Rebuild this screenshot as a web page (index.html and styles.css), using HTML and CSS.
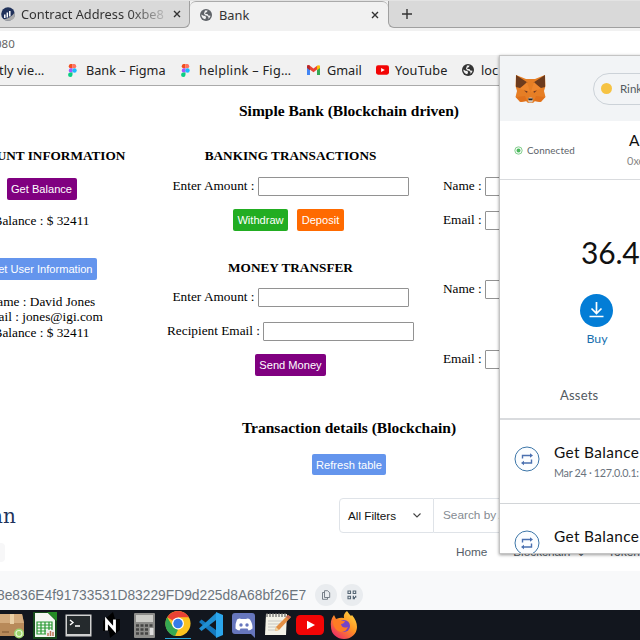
FILE: index.html
```
<!DOCTYPE html>
<html lang="en">
<head>
<meta charset="utf-8">
<title>Bank</title>
<link rel="stylesheet" href="styles.css">
</head>
<body>
<svg class="defs" width="0" height="0">
  <defs>
    <symbol id="globe" viewBox="0 0 12 12"><circle cx="6" cy="6" r="6" fill="currentColor"/><path d="M1.300 5.500 3.500 6.800 5.300 7l.8 1.300-.8 1.900C3 10 1.300 8.200 1.300 5.500zM5 1.500 7.600 1.600 7 3 5.500 3.700 5.200 5l2.300.1.800 1.300 2.200.3C10.200 8 9.500 9 8.300 9.800L8.500 8 7 6.700 5 6.200 4 4.500z" fill="#f1f1f1"/></symbol>
    <symbol id="figma" viewBox="0 0 9 13"><path d="M4.500 0h-2a2.200 2.200 0 0 0 0 4.300h2z" fill="#f24e1e"/><path d="M4.500 0h2a2.200 2.200 0 0 1 0 4.300h-2z" fill="#ff7262"/><path d="M4.500 4.300h-2a2.200 2.200 0 0 0 0 4.300h2z" fill="#a259ff"/><circle cx="6.500" cy="6.500" r="2.200" fill="#1abcfe"/><path d="M4.500 8.600h-2a2.200 2.200 0 1 0 2 2.200z" fill="#0acf83"/></symbol>
    <symbol id="swap" viewBox="0 0 26 26"><circle cx="13" cy="13" r="12" fill="#fbfdff" stroke="#3d76a8" stroke-width="1"/><path d="M8.500 12.500V9.500h8M17.500 13.500v3.500h-8" fill="none" stroke="#4a70b0" stroke-width="1.400"/><path d="M16 7.200 19 9.500l-3 2.300zM10 14.700 7 17l3 2.300z" fill="#4a70b0"/></symbol>
    <symbol id="yt" viewBox="0 0 28 20"><rect width="28" height="20" rx="4.500" fill="#f20505"/><path d="m11 5.800 8 4.200-8 4.200z" fill="#fff"/></symbol>
  </defs>
</svg>
<div class="desktop">
  <nav class="tabs">
    <div class="tab tab-idle">
      <svg class="scan" viewBox="0 0 14 14"><circle cx="7" cy="7" r="6.800" fill="#21325b"/><path d="M3.800 11V7.500M6.300 10.500V5.500M8.800 9.500V4" stroke="#fff" stroke-width="1.500"/><path d="M2.500 12.400Q10 11 13.700 5.500 15 12 9 13.600 5 14.300 2.500 12.400" fill="#aaa"/></svg>
      <span class="tab-title faded">Contract Address 0xbe8</span>
      <svg class="x" viewBox="0 0 8 8"><path d="m1 1 6 6m0-6-6 6"/></svg>
    </div>
    <div class="tab tab-live">
      <svg class="globe grey"><use href="#globe"/></svg>
      <span class="tab-title">Bank</span>
      <svg class="x" viewBox="0 0 8 8"><path d="m1 1 6 6m0-6-6 6"/></svg>
    </div>
    <div class="tab-rest"><svg viewBox="0 0 10 10"><path d="M5 0v10M0 5h10" stroke="#333" stroke-width="1.400"/></svg></div>
  </nav>
  <div class="address">080</div>
  <div class="bookmarks">
    <span class="bm bm-first"><span>tly vie…</span></span>
    <span class="bm bm-bank"><svg class="figma"><use href="#figma"/></svg>Bank – Figma</span>
    <span class="bm bm-help"><svg class="figma"><use href="#figma"/></svg>helplink – Fig…</span>
    <span class="bm bm-mail"><svg class="gmail" viewBox="0 0 13 10"><path d="M0 1.500V10h3V4z" fill="#4285f4"/><path d="M13 1.500V10h-3V4z" fill="#34a853"/><path d="M0 1.500C0 0 1.500-.4 2.600.5L6.500 3.400 10.400.5 10 4.500 6.500 7.200 0 2.500z" fill="#ea4335"/><path d="M0 1.500V3l3 2.200V.8C1.500-.3 0 0 0 1.500" fill="#b5282c"/><path d="M10 .8v4.400L13 3V1.500C13 0 11.500-.3 10 .8" fill="#fbbc04"/></svg>Gmail</span>
    <span class="bm bm-tube"><svg class="tube"><use href="#yt"/></svg>YouTube</span>
    <span class="bm"><svg class="globe"><use href="#globe"/></svg>loc</span>
  </div>

  <main class="bank">
    <h1>Simple Bank (Blockchain driven)</h1>
    <div class="columns">
      <section class="account">
        <h2>ACCOUNT INFORMATION</h2>
        <button class="purple balance-btn">Get Balance</button>
        <p class="balance">Balance : $ 32411</p>
        <button class="blue user-btn">Get User Information</button>
        <p class="details">Name : David Jones<br>Email : jones@igi.com<br>Balance : $ 32411</p>
      </section>
      <section class="transact">
        <h2>BANKING TRANSACTIONS</h2>
        <label>Enter Amount :<input></label>
        <div class="pair"><button class="green">Withdraw</button><button class="orange">Deposit</button></div>
        <h2 class="transfer">MONEY TRANSFER</h2>
        <label class="sum">Enter Amount :<input></label>
        <label class="recipient">Recipient Email :<input></label>
        <button class="purple send">Send Money</button>
      </section>
      <section class="people">
        <label>Name :<input></label>
        <label class="p2">Email :<input></label>
        <label class="p3">Name :<input></label>
        <label class="p4">Email :<input></label>
      </section>
    </div>
    <div class="history">
      <h1>Transaction details (Blockchain)</h1>
      <button class="blue refresh">Refresh table</button>
    </div>
  </main>

  <section class="explorer">
    <div class="top">
      <span class="logo">an</span>
      <div class="filters"><span>All Filters</span><svg viewBox="0 0 8 5"><path d="m.500.500 3.500 3.500L7.500.500" fill="none" stroke="#444" stroke-width="1.100"/></svg></div>
      <div class="search">Search by A</div>
    </div>
    <div class="menu"><i class="chip"></i><span class="home">Home</span><span class="chain">Blockchain</span><span class="drop">⌄</span><span>Token</span></div>
    <div class="hash"><span>8e836E4f91733531D83229FD9d225d8A68bf26E7</span>
      <i><svg viewBox="0 0 10 10"><path d="M3.500.700h3l2.200 2v4.800H3.500zM3.500 2.500H1.500v6.800h5V7.500" fill="none" stroke="#6b747e" stroke-width=".9"/></svg></i>
      <i><svg viewBox="0 0 10 10"><path d="M1 1h2.500v2.500H1zM6.200 1h2.500v2.500H6.200zM1 6.200h2.500v2.500H1z" fill="none" stroke="#566675" stroke-width="1.100"/><path d="M5.700 5.700h1.300v1.300h1V5.700h1.300v2H8v1.500H5.700z" fill="#566675"/></svg></i>
    </div>
  </section>

  <footer class="taskbar">
    <svg class="t-box" viewBox="0 0 25 27"><path d="M0 2h22l2 9v13H0z" fill="#b88a5a"/><path d="M0 2h22l2 9H0z" fill="#d3ab7d"/><path d="M10 2h4v10h-4z" fill="#ead0a6"/><path d="M2 20h7" stroke="#79522f"/><circle cx="19" cy="21.500" r="5" fill="#9cd56e"/><circle cx="19" cy="21.500" r="3" fill="none" stroke="#e5f7d5" stroke-width="1.200"/></svg>
    <svg class="t-sheet" viewBox="0 0 24 27"><path d="M0 0h24v27H0z" fill="#174b1b"/><path d="M2 1h13l7 7v17H2z" fill="#f4f8f2"/><path d="M14 0h10v9z" fill="#238b24"/><path d="M4 10h15v12H4zM4 13h15M4 16h15M4 19h15M8 10v12M12 10v12M16 10v12" fill="none" stroke="#299932" stroke-width="1.200"/><path d="M13 18h8v6h-8z" fill="#eee"/><path d="M15 24v-3M17.500 24v-5M20 24v-4" stroke="#c07858" stroke-width="1.500"/></svg>
    <svg class="t-term" viewBox="0 0 27 23"><path d="M.5.500h26v22H.5z" fill="#d1d1d1"/><path d="M2 2h23v18H2z" fill="#252a2d"/><path d="m5 6 3 2.500L5 11M10 12h5" fill="none" stroke="#fff" stroke-width="1.400"/></svg>
    <svg class="t-n" viewBox="0 0 17 26"><path d="m10 0 2 7h5v11L7 26l-1-7H0V9z" fill="#000"/><path d="M3.500 18.500V8.500L11.500 17.500V7.500" fill="none" stroke="#fff" stroke-width="2.800"/></svg>
    <svg class="t-calc" viewBox="0 0 21 25"><rect width="21" height="25" rx="1" fill="#8c8c8a"/><path d="M2 2h17v7H2z" fill="#cbcbc7"/><path d="M2 12.500h17M2 16.500h17M2 20.500h17" stroke="#444" stroke-width="2.400" stroke-dasharray="3 1.500"/><path d="M15.500 15h4v7h-4z" fill="#ddd"/></svg>
    <svg class="t-chrome" viewBox="0 0 26 28"><circle cx="13" cy="13" r="13" fill="#fcc31e"/><path d="M13 13 1.800 6.400A13 13 0 0 1 24.300 6.600H13z" fill="#e94235"/><path d="M1.800 6.400 8 16.500l5 3L10 26A13 13 0 0 1 1.800 6.400" fill="#35a853"/><circle cx="13" cy="13" r="6.200" fill="#fff"/><circle cx="13" cy="13" r="4.900" fill="#357ce8"/></svg>
    <svg class="t-code" viewBox="0 0 26 26"><path d="M18 1v24L1 10l2.500-2.500L18 18z" fill="#1478bd"/><path d="M18 1v7L3.500 19 1 16.500z" fill="#208fd2"/><path d="m18 0 7 3v20l-7 3z" fill="#2ba6ed"/></svg>
    <svg class="t-discord" viewBox="0 0 24 25"><path d="M3 0h17a3 3 0 0 1 3 3v22l-4-4H3a3 3 0 0 1-3-3V3a3 3 0 0 1 3-3" fill="#6676bd"/><path d="M5 6.500Q8 5 9 6h5q2-1 4 .5 3 5 2.500 9-2.500 2-4 2l-1-2h-7l-1 2q-2-.2-4-2Q3 11 5 6.500" fill="#fff"/><circle cx="9" cy="12" r="1.700" fill="#6676bd"/><circle cx="15" cy="12" r="1.700" fill="#6676bd"/></svg>
    <svg class="t-note" viewBox="0 0 28 26"><path d="M2 2h21l-1 21H1z" fill="#f3f2e8"/><path d="M3 1v4M6 1v4M9 1v4M12 1v4M15 1v4M18 1v4M21 1v4" stroke="#666" stroke-width="1.200"/><path d="M4 9h14M4 12h13M4 15h10M4 18h8" stroke="#bbb" stroke-width=".8"/><path d="m11 19 1-4L24 3l3 2-12 13z" fill="#e38e43"/><path d="m11 19 1-4 3 3z" fill="#edd3a3"/><path d="m24 3 3 2-2 2-3-2z" fill="#c76552"/></svg>
    <svg class="t-yt"><use href="#yt"/></svg>
    <svg class="t-fox" viewBox="0 0 27 28"><defs><linearGradient id="ff" x1="1" y1="0" x2=".2" y2="1"><stop offset="0" stop-color="#ffe34a"/><stop offset=".5" stop-color="#ff9322"/><stop offset="1" stop-color="#ef2868"/></linearGradient></defs><path d="M17 0q2 3 4 5l1-1q5 6 5 12a13 12 0 0 1-26 0Q0 9 4 4l2 4q5-2 8-1-1-4 3-7" fill="url(#ff)"/><circle cx="14" cy="15" r="6" fill="#7644c6"/><path d="M3 9q5-2 8 1h4q-1 3-4 3 1 5 7 3-3 7-10 4-6-4-5-11" fill="#ff7b24"/></svg>
  </footer>

  <aside class="wallet">
    <header>
      <svg class="fox" viewBox="0 0 31 30"><path d="m1 1 10 4h9l10-4 .5 11-1.500 5 1.500 6-4.500 5-6-1-2 2h-5l-2-2-6 1-4.500-5L2 17 .5 12z" fill="#e67e25"/><path d="m1 1 11.500 7.500L5 14l-4-1zM30 1 18.500 8.500 26 14l4-1z" fill="#6d3b1d"/><path d="m12 8 3 10-5-2-5-1zM19 8l-3 10 5-2 5-1z" fill="#ee862d"/><path d="m9 16.500 3.500.8-.5 1.700zM22 16.500l-3.500.8.5 1.700z" fill="#743c22"/><path d="m1 23 9-1 2 5-6 1zM30 23l-9-1-2 5 6 1z" fill="#e0711c"/><path d="m13 24.500 1.500-1h2l1.500 1-.5 4h-4z" fill="#d8c7b8"/><path d="M13 24.500h5l-.8 1.700h-3.400z" fill="#22211f"/></svg>
      <div class="network"><i></i>Rink</div>
    </header>
    <div class="status">
      <svg viewBox="0 0 9 9"><circle cx="4.500" cy="4.500" r="3.700" fill="#effaf0" stroke="#7acb86" stroke-width=".9"/><circle cx="4.500" cy="4.500" r="1.900" fill="#4cb85f"/></svg>
      <span class="connected">Connected</span>
      <div class="who"><b>A</b><span>0xe</span></div>
    </div>
    <div class="funds">
      <div class="amount">36.4</div>
      <svg viewBox="0 0 33 33"><circle cx="16.500" cy="16.500" r="16.500" fill="#037dd6"/><path d="M16.500 8v11.500m-5-5 5 5 5-5M9.500 22.500h14" fill="none" stroke="#fff" stroke-width="1.700"/></svg>
      <span class="buy">Buy</span>
    </div>
    <div class="assets">Assets</div>
    <div class="entry"><svg><use href="#swap"/></svg><div><b>Get Balance</b><span>Mar 24 · 127.0.0.1:</span></div></div>
    <div class="entry"><svg><use href="#swap"/></svg><div><b>Get Balance</b></div></div>
  </aside>
</div>
</body>
</html>
```

FILE: styles.css
```
* { box-sizing: border-box; }
body { margin: 0; }
svg { display: block; flex: none; }
.defs { position: absolute; }
.desktop { position: relative; width: 640px; height: 640px; overflow: hidden; background: #fff; display: flex; flex-direction: column; }
.desktop > * { flex: none; }

.tabs { height: 31px; display: flex; background: #f1f1f1; font: 12.8px "Noto Sans", sans-serif; color: #333; border-top: 1px solid #e3e3e3; }
.tab { display: flex; align-items: center; height: 27px; }
.tab-idle { width: 190px; background: #d9d9d9; border-bottom: 1px solid #a0a0a0; border-right: 1px solid #a0a0a0; border-bottom-right-radius: 6px; padding-left: 1px; }
.scan { width: 14px; height: 14px; }
.tab-title { margin-left: 6px; white-space: nowrap; }
.faded { width: 144px; overflow: hidden; -webkit-mask-image: linear-gradient(90deg, #000 75%, transparent 105%); mask-image: linear-gradient(90deg, #000 75%, transparent 105%); }
.x { width: 8px; height: 8px; stroke: #333; stroke-width: 1.400; }
.tab-idle .x { margin-left: 8px; }
.tab-live { width: 198px; padding-left: 10px; border-top: 1px solid #aaa; border-radius: 6px 6px 0 0; }
.tab-live .tab-title { width: 152px; margin-left: 7px; }
.globe { width: 12px; height: 12px; color: #333; }
.grey { color: #5f6368; }
.tab-rest { flex: 1; height: 27px; background: #d9d9d9; border-bottom: 1px solid #a0a0a0; border-left: 1px solid #a0a0a0; border-bottom-left-radius: 6px; padding: 8px 0 0 13px; }
.tab-rest svg { width: 10px; height: 10px; }
.address { height: 24px; background: #fff; font: 11.5px/25px "Noto Sans", sans-serif; color: #666; text-indent: -5px; }
.bookmarks { height: 31px; background: #f1f1f1; border-bottom: 1px solid #aaa; display: flex; align-items: center; font: 12.7px "Noto Sans", sans-serif; color: #222; white-space: nowrap; overflow: hidden; }
.bm { display: flex; align-items: center; flex: none; }
.bm-first { width: 68px; letter-spacing: .1px; }
.bm-first span { margin-left: -1px; }
.bm-bank { width: 113px; }
.bm-help { width: 126px; letter-spacing: .3px; }
.bm-mail { width: 69px; }
.bm-tube { width: 86px; letter-spacing: .2px; }
.figma { width: 9px; height: 13px; margin-right: 9px; }
.gmail { width: 13px; height: 10px; margin-right: 7px; }
.tube { width: 13px; height: 10px; margin-right: 6px; }
.bm .globe { margin-right: 7px; }

.bank { height: 412px; font: 13.3px/15.5px "Liberation Serif", serif; color: #000; }
h1, h2, p { margin: 0; }
.bank h1 { width: 698px; text-align: center; font-size: 15.5px; line-height: 50px; }
.bank h2 { text-align: center; font-size: 13.25px; line-height: 40px; }
.columns { display: grid; grid-template-columns: 248px 251px 224px; margin-left: -83px; height: 262px; }
.columns section { display: flex; flex-direction: column; align-items: center; }
.columns .account { padding-left: 1px; }
button { border: 0; border-radius: 2px; color: #fff; font: 11.1px "Liberation Sans", sans-serif; height: 22px; padding: 0; }
.purple { background: purple; }
.blue { background: #6495ed; }
.green { background: #22ad22; }
.orange { background: #ff6a00; }
.balance-btn { width: 70px; margin-top: 2px; }
.balance { margin-top: 13px; }
.user-btn { width: 111px; margin: 29px 1px 0 0; height: 22px; }
.details { text-align: center; margin-top: 14px; }
label { display: flex; align-items: center; height: 18px; gap: 3px; white-space: nowrap; }
input { width: 151px; height: 19px; flex: none; border: 1px solid #929292; border-radius: 1px; margin: 0; padding: 0; background: #fff; }
.transact > label { margin-top: 1px; }
.pair { display: flex; gap: 9px; margin: 14px 4px 0 0; }
.pair .green { width: 55px; }
.pair .orange { width: 47px; }
.bank .transfer { margin-top: 17px; }
.bank .sum { margin-top: 0; }
.bank .recipient { margin-top: 16px; }
.send { width: 71px; margin-top: 14px; }
.columns .people { align-items: flex-start; padding: 41px 0 0 27px; }
.people label { justify-content: space-between; width: 193px; }
.p2 { margin-top: 16px; }
.p3 { margin-top: 51px; }
.p4 { margin-top: 52px; }
.history { width: 698px; padding-top: 5px; display: flex; flex-direction: column; align-items: center; }
.refresh { width: 74px; height: 21px; margin-top: 1px; }

.explorer { height: 112px; background: #fff; font: 12px "Liberation Sans", sans-serif; color: #555e68; }
.top { display: flex; height: 35px; }
.logo { width: 339px; font: 20px/37px "DejaVu Serif", serif; color: #21325b; text-indent: -9px; }
.filters { width: 95px; border: 1px solid #dfe3e8; border-radius: 4px 0 0 4px; display: flex; align-items: center; padding-left: 8px; color: #111; font-size: 11.7px; }
.filters span { width: 65px; }
.filters svg { width: 8px; height: 5px; }
.search { flex: 1; border: solid #dfe3e8; border-width: 1px 0; padding-left: 9px; line-height: 33px; font-size: 11.8px; color: #858b92; }
.menu { height: 38px; display: flex; align-items: center; white-space: nowrap; }
.chip { width: 5px; height: 19px; background: #f7f7f8; border-radius: 0 4px 4px 0; margin-right: 451px; }
.home { width: 58px; font-size: 11.8px; }
.chain { width: 64px; font-size: 11.8px; }
.drop { width: 32px; }
.hash { height: 39px; background: #f8f9fa; display: flex; align-items: center; padding-top: 9px; font-size: 13.8px; color: #6c757d; }
.hash span { width: 315px; text-indent: -3px; }
.hash i { width: 22px; height: 22px; border-radius: 50%; background: #e9ecef; margin-right: 4px; display: grid; place-items: center; }
.hash svg { width: 10px; height: 10px; }

.taskbar { height: 30px; background: #12161e; display: flex; align-items: center; }
.t-box { width: 25px; height: 27px; }
.t-sheet { width: 24px; height: 27px; margin-left: 8px; }
.t-term { width: 27px; height: 23px; margin-left: 8px; }
.t-n { width: 17px; height: 26px; margin-left: 11px; }
.t-calc { width: 21px; height: 25px; margin-left: 14px; }
.t-chrome { width: 26px; height: 28px; margin-left: 10px; border-bottom: 1px solid #2aa5d8; }
.t-code { width: 26px; height: 26px; margin-left: 7px; }
.t-discord { width: 24px; height: 25px; margin-left: 8px; }
.t-note { width: 28px; height: 26px; margin-left: 8px; }
.t-yt { width: 28px; height: 20px; margin-left: 4px; }
.t-fox { width: 27px; height: 28px; margin-left: 6px; }

.wallet { position: absolute; left: 499px; top: 55px; width: 300px; height: 499px; overflow: hidden; background: #fff; border: 1px solid #c4c4c4; box-shadow: 0 1px 3px #0006; font-family: Lato, sans-serif; color: #111; white-space: nowrap; }
.wallet b { font-weight: 400; }
.wallet header { height: 65px; background: #f2f4f6; display: flex; align-items: center; padding-left: 15px; }
.fox { width: 31px; height: 30px; }
.network { margin-left: 47px; width: 150px; height: 32px; border: 1px solid #ccd2d8; border-radius: 16px; display: flex; align-items: center; padding-left: 7px; font-size: 11.5px; color: #535a61; }
.network i { width: 11px; height: 11px; border-radius: 50%; background: #f6c343; margin-right: 8px; }
.status { height: 59px; border-bottom: 1px solid #d9dbde; display: flex; align-items: center; padding-left: 14px; }
.status svg { width: 9px; height: 9px; }
.connected { margin: -1px 0 0 4px; width: 100px; font-size: 9.8px; letter-spacing: .1px; color: #5c6268; }
.who b { display: block; font-size: 15.5px; line-height: 20px; margin-left: 2px; }
.who span { font-size: 11px; line-height: 21px; color: #888; display: block; }
.funds { height: 192px; padding-top: 52px; }
.amount { font-size: 30px; line-height: 40px; margin-left: 81px; letter-spacing: -.2px; }
.funds svg { width: 33px; height: 33px; margin: 22px 0 0 80px; }
.buy { display: block; width: 194px; text-align: center; font-size: 12.3px; line-height: 24px; color: #176fae; }
.assets { height: 48px; border-bottom: 2px solid #d9dbde; padding-left: 60px; font-size: 13px; line-height: 46px; letter-spacing: .2px; color: #535a61; }
.entry { height: 84px; border-bottom: 1px solid #d2d5d8; display: flex; align-items: flex-start; padding: 26px 0 0 14px; }
.entry svg { width: 26px; height: 26px; }
.entry div { margin: -5px 0 0 14px; }
.entry b { display: block; font-size: 15.4px; line-height: 22px; letter-spacing: .35px; }
.entry span { display: block; font-size: 10.8px; line-height: 19px; letter-spacing: -.3px; color: #6a737d; }
```
